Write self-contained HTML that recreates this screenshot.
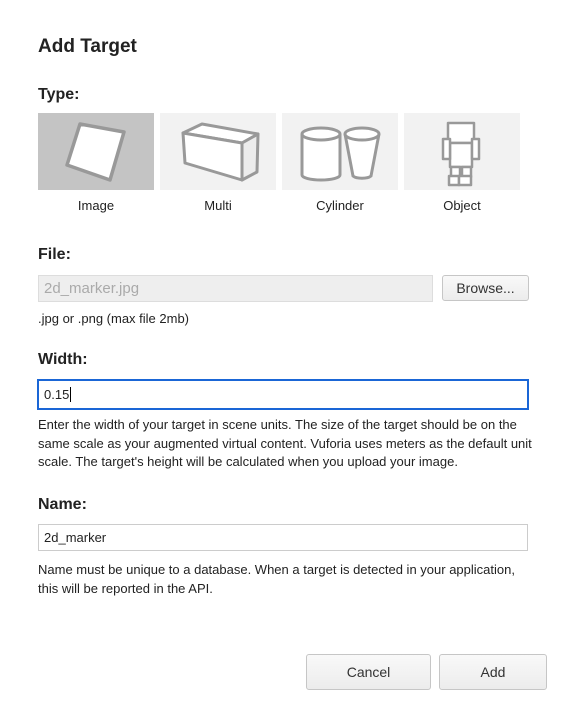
<!DOCTYPE html>
<html><head><style>
*{margin:0;padding:0;box-sizing:border-box}
body{width:569px;height:727px;background:#fff;font-family:"Liberation Sans",sans-serif;color:#222;position:relative;overflow:hidden}
h1{position:absolute;left:38px;top:36px;font-size:19px;font-weight:bold;color:#222}
.h{position:absolute;left:38px;font-size:16px;font-weight:bold;color:#222}
.tile{position:absolute;top:113px;width:116px;height:77px;background:#f2f2f2}
.lbl{position:absolute;top:198px;width:116px;text-align:center;font-size:13px}
.t{position:absolute;left:38px;font-size:13px;line-height:18.5px;color:#222}
.inp{position:absolute;border:1px solid #ccc;background:#fff;font-size:13px;padding-left:5px}
.btn{position:absolute;border:1px solid #c6c6c6;border-radius:3px;background:linear-gradient(#f9f9f9,#ececec);text-align:center;font-size:14px;color:#333}
</style></head><body>
<h1>Add Target</h1>
<div class="h" style="top:86px">Type:</div>

<div class="tile" style="left:38px;background:#c4c4c4">
<svg width="116" height="77"><polygon points="42,11 86,19 72,67 29,52" fill="#fff" stroke="#999" stroke-width="3.5" stroke-linejoin="round"/></svg></div>
<div class="tile" style="left:160px">
<svg width="116" height="77"><g fill="#fff" stroke="#999" stroke-width="3" stroke-linejoin="round">
<polygon points="23,20 42,11 98,21 82,30"/><polygon points="23,20 82,30 82,67 25,50"/><polygon points="82,30 98,21 97,59 82,67" fill="#ececec"/></g></svg></div>
<div class="tile" style="left:282px">
<svg width="116" height="77"><g fill="#fff" stroke="#999" stroke-width="3">
<path d="M20,21 V62 A19,5 0 0 0 58,62 V21"/><ellipse cx="39" cy="21" rx="19" ry="6"/>
<path d="M63,21 L71,63 A10,4 0 0 0 89,63 L97,21"/><ellipse cx="80" cy="21" rx="17" ry="6"/></g></svg></div>
<div class="tile" style="left:404px">
<svg width="116" height="77"><g fill="#fff" stroke="#999" stroke-width="2.5" stroke-linejoin="round">
<rect x="44" y="10" width="26" height="20"/><rect x="46" y="30" width="22" height="24"/><rect x="39" y="26" width="7" height="20"/><rect x="68" y="26" width="7" height="20"/>
<rect x="47" y="54" width="9" height="10"/><rect x="58" y="54" width="9" height="10"/><rect x="45" y="63" width="10" height="9"/><rect x="55" y="63" width="12" height="9"/></g></svg></div>
<div class="lbl" style="left:38px">Image</div>
<div class="lbl" style="left:160px">Multi</div>
<div class="lbl" style="left:282px">Cylinder</div>
<div class="lbl" style="left:404px">Object</div>

<div class="h" style="top:246px">File:</div>
<div class="inp" style="left:38px;top:275px;width:395px;height:27px;background:#eee;border-color:#ddd;color:#aaa;font-size:15px;line-height:25px">2d_marker.jpg</div>
<div class="btn" style="left:442px;top:275px;width:87px;height:26px;line-height:24px">Browse...</div>
<div class="t" style="top:310px">.jpg or .png (max file 2mb)</div>

<div class="h" style="top:351px">Width:</div>
<div class="inp" style="left:37px;top:379px;width:492px;height:31px;border:2px solid #1a66d6;line-height:27px;padding-left:5px">0.15<span style="border-left:1px solid #000;margin-left:1px"></span></div>
<div class="t" style="top:416px;width:512px">Enter the width of your target in scene units. The size of the target should be on the same scale as your augmented virtual content. Vuforia uses meters as the default unit scale. The target's height will be calculated when you upload your image.</div>

<div class="h" style="top:496px">Name:</div>
<div class="inp" style="left:38px;top:524px;width:490px;height:27px;line-height:25px">2d_marker</div>
<div class="t" style="top:561px;width:495px">Name must be unique to a database. When a target is detected in your application,<br>this will be reported in the API.</div>

<div class="btn" style="left:306px;top:654px;width:125px;height:36px;line-height:34px">Cancel</div>
<div class="btn" style="left:439px;top:654px;width:108px;height:36px;line-height:34px">Add</div>
</body></html>
